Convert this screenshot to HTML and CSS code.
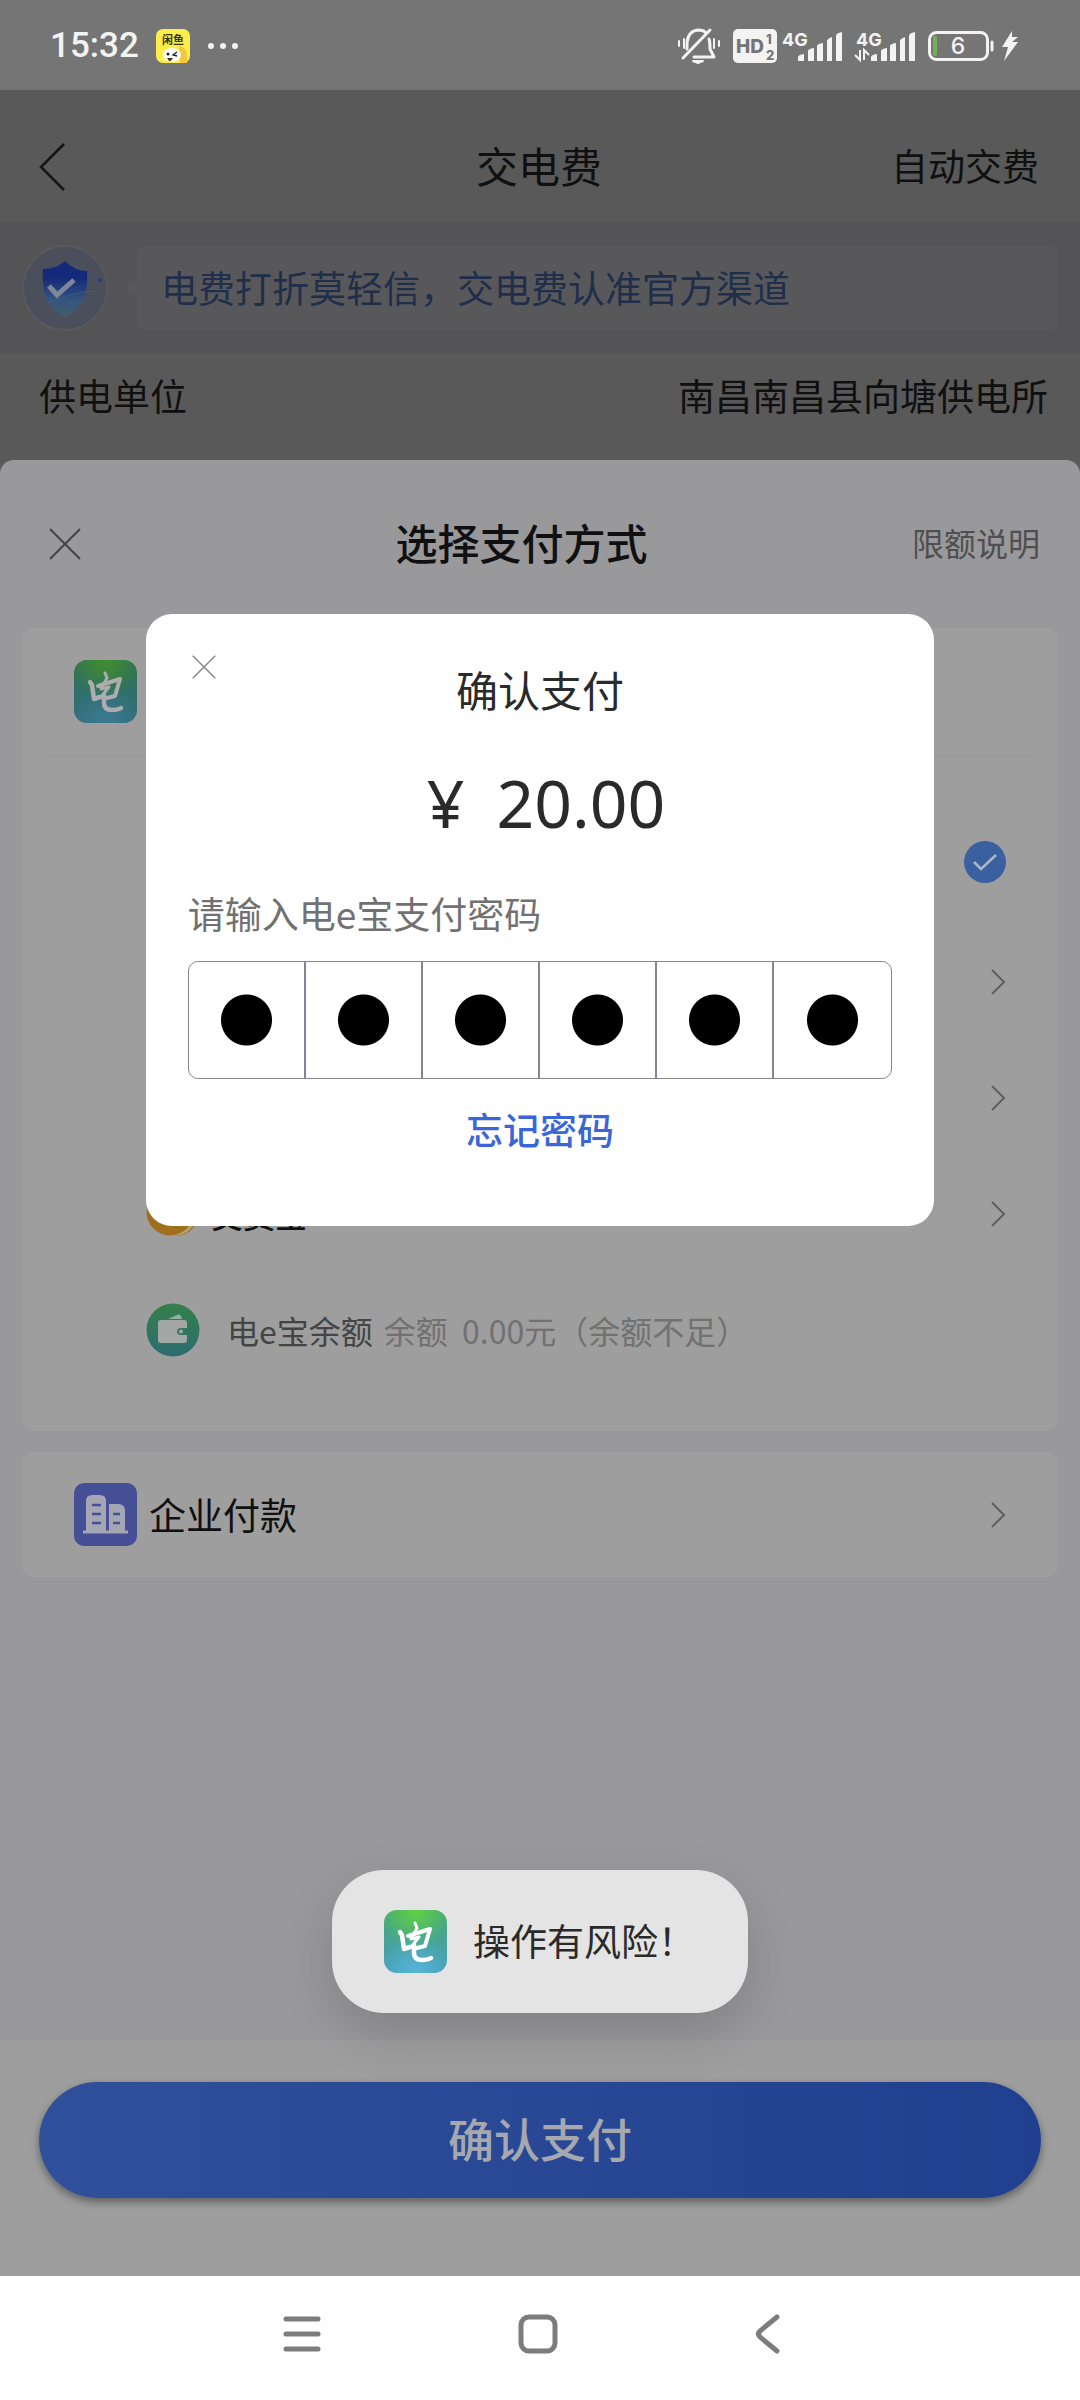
FILE: index.html
```html
<!DOCTYPE html>
<html lang="zh-CN">
<head>
<meta charset="utf-8">
<meta name="viewport" content="width=device-width, initial-scale=1">
<title>交电费</title>
<link rel="stylesheet" href="styles.css">
</head>
<body>
<svg class="defs" aria-hidden="true">
  <defs>
    <radialGradient id="logo-top" cx="0.5" cy="0" r="0.6">
      <stop offset="0" stop-color="#5fd245"/><stop offset="1" stop-color="#5fd245" stop-opacity="0"/>
    </radialGradient>
    <radialGradient id="logo-bottom" cx="0.5" cy="1" r="0.6">
      <stop offset="0" stop-color="#58b4d8"/><stop offset="1" stop-color="#58b4d8" stop-opacity="0"/>
    </radialGradient>
    <linearGradient id="logo-base" x1="0" y1="0" x2="0" y2="1">
      <stop offset="0" stop-color="#47a578"/><stop offset="1" stop-color="#46a0b8"/>
    </linearGradient>
    <linearGradient id="wallet-base" x1="0" y1="0" x2="0" y2="1">
      <stop offset="0" stop-color="#34804a"/><stop offset="1" stop-color="#2b6c70"/>
    </linearGradient>
    <linearGradient id="shield-base" x1="0" y1="0" x2="0" y2="1">
      <stop offset="0.3" stop-color="#15297a"/><stop offset="0.7" stop-color="#345580"/><stop offset="1" stop-color="#435d68"/>
    </linearGradient>
    <symbol id="logo" viewBox="0 0 63 63">
      <rect width="63" height="63" rx="13" fill="url(#logo-base)"/>
      <rect width="63" height="63" rx="13" fill="url(#logo-top)"/>
      <rect width="63" height="63" rx="13" fill="url(#logo-bottom)"/>
      <g fill="none" stroke="#fff" stroke-width="4.500" stroke-linecap="round" stroke-linejoin="round">
        <path d="M16 22L18 25L20 39L26 37"/>
        <path d="M24 26L46 19L41 36L33 38" stroke-width="4"/>
        <path d="M31 13L33 18L27 29L35 27L27 37" stroke-width="3"/>
        <path d="M30 35V43Q30 50 38 50Q44 50 47 48"/>
      </g>
    </symbol>
    <symbol id="chevron" viewBox="0 0 16 26"><path d="M2 1L14 13L2 25" fill="none" stroke="#5f5f5f" stroke-width="2"/></symbol>
    <symbol id="cross" viewBox="0 0 32 32"><path d="M1 1L31 31M31 1L1 31" fill="none" stroke="currentColor" stroke-width="2"/></symbol>
    <symbol id="bars" viewBox="0 0 44 29">
      <path fill="#f3f3f3" d="M0 29V25Q0 23 6 22V29ZM10 29V19Q10 17 16 16V29ZM19 29V14Q19 12 25 11V29ZM29 29V9Q29 7 34 5V29ZM38 29V4Q38 1 44 0V29Z"/>
    </symbol>
  </defs>
</svg>

<header class="status">
  <div class="status-left">
    <span class="clock">15:32</span>
    <svg width="34" height="34" viewBox="0 0 34 34">
      <rect width="34" height="34" rx="7" fill="#fcee4a"/>
      <text x="17" y="15" text-anchor="middle" font-size="11" font-weight="700" fill="#35320f">闲鱼</text>
      <path d="M23 17Q33 18 31 34H24Z" fill="#f2c738"/>
      <ellipse cx="16" cy="26" rx="9" ry="7" fill="#fff"/>
      <circle cx="12" cy="25" r="1.5" fill="#222"/><path d="M21 23L17 26L21 27" fill="none" stroke="#222" stroke-width="1.3"/>
      <path d="M11 29H17Q15 33 13 32Z" fill="#5b2d10"/>
    </svg>
    <svg width="32" height="8" viewBox="0 0 32 8" fill="#f3f3f3"><circle cx="4" cy="4" r="3"/><circle cx="16" cy="4" r="3"/><circle cx="28" cy="4" r="3"/></svg>
  </div>
  <div class="status-right">
    <svg width="42" height="36" viewBox="0 0 42 36" fill="none" stroke="#f3f3f3" stroke-width="3" stroke-linecap="round" stroke-linejoin="round">
      <path d="M5 30L32 2M9 21V15Q10 3 20 2Q25 2 27 4M31 11Q32 14 32 21L36 29H16"/>
      <path d="M1 13V18M6 11V20M41 13V18M36 11V20" stroke-width="2"/>
      <path d="M15 33H25L20 35Z" stroke-width="2"/>
    </svg>
    <svg class="hd" width="44" height="34" viewBox="0 0 44 34">
      <rect width="44" height="34" rx="5" fill="#f3f3f3"/>
      <text x="3" y="24" font-size="19" font-weight="800" fill="#757575">HD</text>
      <text x="33" y="15" font-size="13" font-weight="800" fill="#757575">1</text>
      <text x="33" y="31" font-size="13" font-weight="800" fill="#757575">2</text>
    </svg>
    <svg width="60" height="34" viewBox="0 0 60 34">
      <text x="0" y="17" font-size="18" font-weight="700" fill="#f3f3f3">4G</text>
      <use href="#bars" x="16" y="3" width="44" height="29"/>
    </svg>
    <svg width="60" height="34" viewBox="0 0 60 34">
      <text x="1" y="17" font-size="18" font-weight="700" fill="#f3f3f3">4G</text>
      <path d="M5 21V31L0 26M9 31V21L14 26" fill="none" stroke="#f3f3f3" stroke-width="2"/>
      <use href="#bars" x="16" y="3" width="44" height="29"/>
    </svg>
    <svg width="90" height="32" viewBox="0 0 90 32">
      <rect x="1.5" y="2.5" width="58" height="27" rx="7" fill="none" stroke="#f3f3f3" stroke-width="3"/>
      <rect x="5" y="6" width="4" height="20" rx="2" fill="#6fb352"/>
      <path d="M64 12V20" stroke="#f3f3f3" stroke-width="3" stroke-linecap="round"/>
      <text x="30" y="24" text-anchor="middle" font-size="23" font-weight="500" fill="#f3f3f3">6</text>
      <path d="M84 1L74 17H80L76 31L90 12H84L90 7H84Z" fill="#f3f3f3"/>
    </svg>
  </div>
</header>

<main class="screen">
  <nav class="topbar">
    <button class="plain" aria-label="返回"><svg width="26" height="48" viewBox="0 0 26 48"><path d="M25 1L2 24L25 47" fill="none" stroke="#151515" stroke-width="2.5"/></svg></button>
    <h1>交电费</h1>
    <a class="auto" href="#">自动交费</a>
  </nav>

  <section class="notice">
    <svg width="86" height="86" viewBox="0 0 86 86">
      <circle cx="43" cy="43" r="42" fill="#4b4f5b" stroke="#5a5a5e" stroke-width="2"/>
      <path d="M43 16Q53 26 65 26Q68 60 43 72Q18 60 21 24Q34 24 43 16Z" fill="url(#shield-base)"/>
      <path d="M22 60Q50 46 78 46" fill="none" stroke="#3e5a80" stroke-width="1"/>
      <circle cx="78" cy="35" r="2" fill="#263c78"/>
      <path d="M27 41L35 50L52 35" fill="none" stroke="#7e8796" stroke-width="5"/>
    </svg>
    <svg class="tip" width="14" height="18" viewBox="0 0 14 18"><path d="M14 0L2 7Q0 9 2 11L14 18Z" fill="#58585a"/></svg>
    <p>电费打折莫轻信，交电费认准官方渠道</p>
  </section>

  <section class="supplier"><span>供电单位</span><span>南昌南昌县向塘供电所</span></section>

  <section class="sheet">
    <div class="sheet-head">
      <button class="plain sheet-close" aria-label="关闭"><svg width="32" height="32"><use href="#cross"/></svg></button>
      <h2>选择支付方式</h2>
      <a class="limit" href="#">限额说明</a>
    </div>

    <div class="card">
      <div class="card-head"><svg class="dim" width="63" height="63"><use href="#logo"/></svg></div>
      <ul class="methods">
        <li class="chosen">
          <svg class="end" width="42" height="42" viewBox="0 0 42 42"><circle cx="21" cy="21" r="21" fill="#3b60a0"/><path d="M10 21L17 28L32 14" fill="none" stroke="#aeb6c6" stroke-width="2.5"/></svg>
        </li>
        <li><svg class="end" width="16" height="26"><use href="#chevron"/></svg></li>
        <li><svg class="end" width="16" height="26"><use href="#chevron"/></svg></li>
        <li>
          <svg width="52" height="52" viewBox="0 0 52 52">
            <circle cx="30" cy="26" r="22" fill="#9a6c22"/><circle cx="28" cy="25" r="23" fill="#b6a36c"/><circle cx="24" cy="24" r="23.500" fill="#a06f1e"/>
          </svg>
          <strong>交费宝</strong>
          <svg class="end" width="16" height="26"><use href="#chevron"/></svg>
        </li>
        <li>
          <svg width="54" height="54" viewBox="0 0 54 54">
            <circle cx="27" cy="27" r="26.500" fill="url(#wallet-base)"/>
            <path d="M22 16L31 12Q35 10 36 16Z" fill="#8fae9f"/>
            <path d="M15 17H38Q41 17 41 20V25H35Q31 25 31 28.500Q31 32 35 32H41V37Q41 40 38 40H15Q12 40 12 37V20Q12 17 15 17Z" fill="#a3a8a6"/>
            <circle cx="35" cy="28.500" r="2" fill="#a3a8a6"/>
          </svg>
          <span class="wallet">电e宝余额</span><span class="balance">余额&nbsp; 0.00元（余额不足）</span>
        </li>
      </ul>
    </div>

    <div class="card company">
      <svg width="63" height="63" viewBox="0 0 63 63">
        <rect width="63" height="63" rx="10" fill="#454f96"/>
        <path d="M12 48V18Q12 12 18 12H26Q32 12 32 18V48ZM35 48V21H44Q51 21 51 28V48Z" fill="#a4a6b4"/>
        <path d="M9 49H54" stroke="#a4a6b4" stroke-width="3"/>
        <path d="M18 22H27M18 31H27M18 40H27M39 31H46M39 40H46" stroke="#454f96" stroke-width="2.5"/>
      </svg>
      <span>企业付款</span>
      <svg class="end" width="16" height="26"><use href="#chevron"/></svg>
    </div>
  </section>

  <footer class="paybar"><button class="pay">确认支付</button></footer>
</main>

<nav class="system">
  <button class="plain" aria-label="最近任务"><svg width="38" height="40" viewBox="0 0 38 40"><path d="M3 5H35M3 20H35M3 35H35" stroke="#7c7c7c" stroke-width="5" stroke-linecap="round"/></svg></button>
  <button class="plain" aria-label="主屏幕"><svg width="40" height="40" viewBox="0 0 40 40"><rect x="3" y="3" width="34" height="34" rx="8" fill="none" stroke="#7c7c7c" stroke-width="5"/></svg></button>
  <button class="plain" aria-label="返回"><svg width="26" height="40" viewBox="0 0 26 40"><path d="M22 3L5 17Q2 20 5 23L22 37" fill="none" stroke="#7c7c7c" stroke-width="5" stroke-linecap="round"/></svg></button>
</nav>

<div class="overlay">
  <form class="dialog" role="dialog" aria-labelledby="dialog-title">
    <button type="button" class="plain dialog-close" aria-label="关闭"><svg width="24" height="24"><use href="#cross"/></svg></button>
    <h2 id="dialog-title">确认支付</h2>
    <p class="amount"><span>¥</span><span>20.00</span></p>
    <label for="pin-1">请输入电e宝支付密码</label>
    <div class="pin">
      <input id="pin-1" type="password" maxlength="1" aria-label="第1位">
      <input type="password" maxlength="1" aria-label="第2位">
      <input type="password" maxlength="1" aria-label="第3位">
      <input type="password" maxlength="1" aria-label="第4位">
      <input type="password" maxlength="1" aria-label="第5位">
      <input type="password" maxlength="1" aria-label="第6位">
    </div>
    <a class="forgot" href="#">忘记密码</a>
  </form>
</div>

<div class="toast-layer">
  <div class="toast" role="status"><svg width="63" height="63"><use href="#logo"/></svg><span>操作有风险！</span></div>
</div>
</body>
</html>
```
FILE: styles.css
```css
* { box-sizing: border-box; }

body {
  position: relative;
  display: flex;
  flex-direction: column;
  min-height: 100vh;
  margin: 0;
  background: #595959;
  color: #101010;
  font: 37px/56px "Noto Sans CJK SC", sans-serif;
}

h1, h2, p, ul { margin: 0; padding: 0; }
h1, h2 { font-size: 42px; font-weight: 400; line-height: 60px; }
a { color: inherit; text-decoration: none; }
svg { display: block; flex: none; overflow: visible; }
.defs { position: absolute; width: 0; height: 0; }
.plain { display: flex; padding: 0; border: 0; background: none; color: inherit; }
.end { margin-left: auto; }

/* Status bar */
.status {
  display: flex;
  justify-content: space-between;
  align-items: center;
  height: 90px;
  padding: 2px 62px 0 50px;
  background: #757575;
  color: #f3f3f3;
}
.status-left, .status-right { display: flex; align-items: center; }
.status-left { gap: 17px; }
.status-right { gap: 13px; font-family: Inter, sans-serif; }
.status-right .hd { margin-right: -8px; }
.clock { font: 500 35px/44px Roboto, sans-serif; }

/* Page */
.screen { display: flex; flex: 1; flex-direction: column; }

.topbar, .sheet-head {
  display: grid;
  grid-template-columns: 1fr auto 1fr;
  align-items: center;
}
.topbar { height: 131px; padding: 23px 41px 0 39px; }
.topbar h1, .auto { padding-bottom: 4px; }
.auto, .limit { justify-self: end; }

.notice {
  display: flex;
  align-items: center;
  height: 132px;
  padding: 2px 22px 0;
  background: #545456;
}
.tip { margin-left: 15px; }
.notice p {
  flex: 1;
  height: 84px;
  padding: 13px 24px;
  border-radius: 8px;
  background: #58585a;
  color: #1f2e4a;
}

.supplier {
  display: flex;
  justify-content: space-between;
  height: 107px;
  padding: 14px 32px 0 39px;
}

/* Payment sheet */
.sheet {
  display: flex;
  flex: 1;
  flex-direction: column;
  padding: 0 22px;
  border-radius: 14px 14px 0 0;
  background: #99999b;
}
.sheet-head { height: 168px; padding: 0 18px 0 27px; }
.sheet-head h2 { padding: 0 46px 4px 0; font-weight: 500; }
.sheet-close { color: #444; }
.limit { padding-bottom: 4px; color: #4f4f50; font-size: 32px; }

.card { border-radius: 12px; background: #9e9e9e; }
.card-head {
  display: flex;
  align-items: center;
  height: 128px;
  margin: 0 20px;
  padding: 0 32px;
  border-bottom: 1px solid #999;
}
.dim { filter: brightness(0.68); }
.methods { padding: 44px 52px 43px 124px; list-style: none; }
.methods li { display: flex; align-items: center; height: 116px; font-size: 32px; }
.methods .chosen { height: 124px; }
.methods strong { margin-left: 13px; font-weight: 500; }
.wallet { margin-left: 27px; color: #444; }
.balance { margin-left: 11px; color: #717171; }
.company { display: flex; align-items: center; height: 125px; margin-top: 21px; padding: 0 52px; }
.company span { margin-left: 12px; padding-bottom: 2px; }

.paybar { height: 236px; padding: 42px 39px; background: #9e9e9e; }
.pay {
  display: block;
  width: 100%;
  height: 116px;
  padding: 0 0 6px;
  border: 0;
  border-radius: 58px;
  background: linear-gradient(90deg, #30509b, #20408f);
  box-shadow: 0 4px 8px #00000066;
  color: #a6a8ae;
  font: 500 46px/108px "Noto Sans CJK SC", sans-serif;
}

/* System navigation */
.system {
  display: flex;
  justify-content: center;
  align-items: center;
  gap: 197px;
  height: 124px;
  padding: 0 16px 8px 0;
  background: #fefefe;
}

/* Confirmation dialog */
.overlay {
  position: absolute;
  inset: 0;
  display: flex;
  justify-content: center;
  align-items: flex-start;
  padding-top: 614px;
}
.dialog {
  display: flex;
  flex-direction: column;
  align-items: center;
  width: 73%;
  height: 612px;
  padding: 41px 42px 0;
  border-radius: 26px;
  background: #fff;
  color: #2a2a2a;
}
.dialog-close { align-self: flex-start; height: 4px; margin-left: 4px; color: #888; }
.amount {
  display: flex;
  gap: 32px;
  margin: 38px 0 0;
  padding-left: 12px;
  font: 66px/90px "Noto Sans", sans-serif;
}
.dialog label { align-self: flex-start; margin-top: 38px; color: #717171; }
.pin {
  display: grid;
  grid-template-columns: repeat(6, 1fr);
  align-self: stretch;
  height: 118px;
  margin-top: 20px;
  overflow: hidden;
  border: 1px solid #85858f;
  border-radius: 10px;
}
.pin input {
  width: 100%;
  min-width: 0;
  height: 100%;
  padding: 0;
  border: 0;
  border-right: 2px solid #85859a;
  border-radius: 0;
  background: radial-gradient(circle, #000 25px, transparent 26px);
  outline: 0;
}
.pin input:last-child { border-right: 0; }
.forgot { margin-top: 22px; color: #3b66d8; font-weight: 500; }

/* Toast */
.toast-layer {
  position: absolute;
  right: 0;
  bottom: 387px;
  left: 0;
  display: flex;
  justify-content: center;
}
.toast {
  display: flex;
  align-items: center;
  gap: 26px;
  height: 143px;
  padding: 0 53px 0 52px;
  border-radius: 52px;
  background: #e4e4e4;
  box-shadow: 0 20px 50px #00000026;
  color: #2a2a2a;
}
.toast span { padding-bottom: 4px; }
```
